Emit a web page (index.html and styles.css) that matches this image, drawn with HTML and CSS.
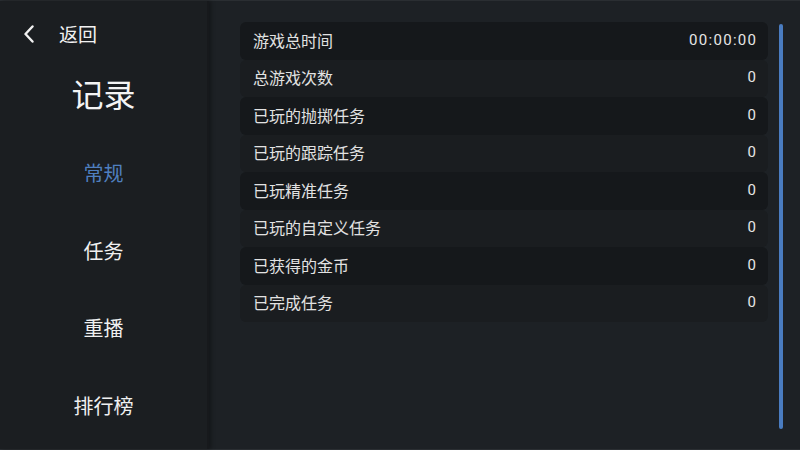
FILE: index.html
```html
<!DOCTYPE html>
<html lang="zh">
<head>
<meta charset="utf-8">
<link rel="stylesheet" href="styles.css">
</head>
<body>
<div class="app">
  <aside class="sidebar">
    <div class="back">
      <svg class="chev" width="12" height="18" viewBox="0 0 12 18"><path d="M9.5 1.5 L2.5 9 L9.5 16.5" fill="none" stroke="#f2f2f2" stroke-width="2.4" stroke-linecap="round" stroke-linejoin="round"/></svg>
      <span class="back-label">返回</span>
    </div>
    <h1 class="title">记录</h1>
    <nav class="nav">
      <div class="nav-item active">常规</div>
      <div class="nav-item">任务</div>
      <div class="nav-item">重播</div>
      <div class="nav-item">排行榜</div>
    </nav>
  </aside>
  <main class="main">
    <div class="list">
      <div class="row"><span class="label">游戏总时间</span><span class="value">00:00:00</span></div>
      <div class="row"><span class="label">总游戏次数</span><span class="value">0</span></div>
      <div class="row"><span class="label">已玩的抛掷任务</span><span class="value">0</span></div>
      <div class="row"><span class="label">已玩的跟踪任务</span><span class="value">0</span></div>
      <div class="row"><span class="label">已玩精准任务</span><span class="value">0</span></div>
      <div class="row"><span class="label">已玩的自定义任务</span><span class="value">0</span></div>
      <div class="row"><span class="label">已获得的金币</span><span class="value">0</span></div>
      <div class="row"><span class="label">已完成任务</span><span class="value">0</span></div>
    </div>
    <div class="scroll"><div class="thumb"></div></div>
  </main>
</div>
</body>
</html>
```
FILE: styles.css
```css
html, body {
  margin: 0;
  padding: 0;
  width: 800px;
  height: 450px;
  overflow: hidden;
  background: #1d2125;
  font-family: "Noto Sans CJK SC", "Noto Sans", sans-serif;
}
.app {
  display: flex;
  width: 800px;
  height: 450px;
  box-sizing: border-box;
  border-top: 1px solid #2a2e32;
  border-bottom: 1px solid #2a2e32;
}
.sidebar {
  width: 207px;
  flex: none;
  background: #1b1e21;
  display: flex;
  flex-direction: column;
  align-items: center;
  box-shadow: 2px 0 4px rgba(0,0,0,0.35);
  border-right: 2px solid #17191c;
  position: relative;
  z-index: 1;
}
.back {
  align-self: flex-start;
  display: flex;
  align-items: center;
  margin: 16px 0 0 23px;
  height: 34px;
}
.chev { display: block; }
.back-label {
  margin-left: 24px;
  color: #f2f2f2;
  font-size: 19px;
  line-height: 34px;
}
.title {
  margin: 20px 0 0 0;
  font-weight: 400;
  font-size: 32px;
  line-height: 44px;
  color: #f4f4f4;
}
.nav {
  display: flex;
  flex-direction: column;
  align-items: center;
  margin-top: 36px;
}
.nav-item {
  height: 77.5px;
  line-height: 44px;
  font-size: 20px;
  color: #f0f0f0;
}
.nav-item.active { color: #4f7fbf; }
.main {
  flex: 1;
  display: flex;
  padding: 21px 0 0 31px;
  background: #1d2125;
}
.list {
  width: 528px;
  display: flex;
  flex-direction: column;
}
.row {
  height: 37.5px;
  display: flex;
  align-items: center;
  justify-content: space-between;
  padding: 0 12px 0 13px;
  border-radius: 6px;
  background: #1a1d20;
  color: #e2e2e2;
  font-size: 16px;
  line-height: 20px;
}
.row:nth-child(odd) { background: #15181b; }
.label { position: relative; top: -1px; }
.value {
  font-family: Roboto, "Noto Sans", sans-serif;
  font-size: 15px;
  color: #e6e6e6;
  letter-spacing: 1.3px;
  margin-right: -1.3px;
  position: relative;
  top: -1px;
}
.scroll {
  margin-left: 11px;
  padding-top: 2px;
}
.thumb {
  width: 4px;
  height: 405px;
  border-radius: 2px;
  background: #4a7cc0;
}
```
